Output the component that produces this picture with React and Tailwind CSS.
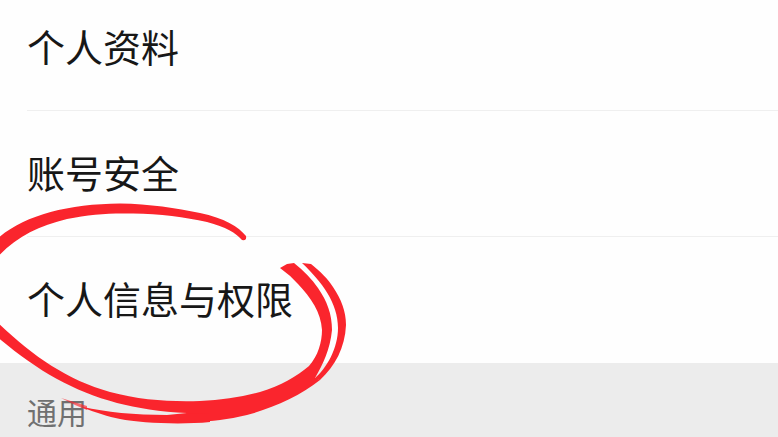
const accountItems = [
  { name: "个人资料", href: "#profile" },
  { name: "账号安全", href: "#security" },
  { name: "个人信息与权限", href: "#permissions" },
];

// Hand-drawn red circle around the permissions row
function MarkerCircle() {
  return (
    <svg
      className="absolute top-0 left-0 pointer-events-none text-[#fa252d]"
      width="360"
      height="437"
      viewBox="0 0 360 437"
      fill="currentColor"
      aria-hidden="true"
    >
      {/* top arc */}
      <path d="M-4 240C22 216 66 204 120 203.500C150 204 176 208 200 213C224 218 239 227 246 236Q247 241 242 240C236 233 226 227 207 222C185 217 160 214 133 213.500C110 213 90 214 67 219C38 226 14 238 -4 259Z" />
      {/* bottom sweep with the inner strand */}
      <path d="M-4 321C30 354 66 380 110 392C140 400 170 402 200 401C222 400 242 397 260 392C281 386 297 376 309 366C318 356 322 342 322 330C321 312 311 298 298 284Q290 275 280 268L287 264L294 263C304 271 312 279 318 288C327 301 332 314 332 330C330 350 323 364 315 378L320 380C300 396 273 408 247 415C222 421 200 423 180 421L187 413C160 412 137 408 117 403C72 391 36 370 -4 336Z" />
      {/* outer strand */}
      <path d="M302 263L311 264C320 271 328 279 333 287C341 299 346 311 346 325C345 348 335 366 320 380L314 379C327 368 338 348 338 328C338 303 322 282 302 263Z" />
      {/* tail */}
      <path d="M83 407C105 412 135 415 167 415L187 413L210 414L210 422C180 425 140 423 120 419C108 417 96 412 83 408Z" />
      <path d="M61 398L87 406V410Q74 405 61 398Z" opacity="0.65" />
    </svg>
  );
}

export default function App() {
  return (
    <main
      className="relative min-h-screen overflow-hidden bg-[#ececec] font-['Noto_Sans_CJK_SC',sans-serif]"
      lang="zh-CN"
    >
      <nav className="bg-[#fefefe] pl-[27px]">
        {accountItems.map((item) => (
          <a
            key={item.name}
            href={item.href}
            className="block pt-[33px] pb-9 text-[38px] leading-[56px] text-[#171717] border-b border-[#efefef] first:pt-[18px] last:border-transparent"
          >
            {item.name}
          </a>
        ))}
      </nav>

      <h2 className="px-[27px] pt-[26px] text-[30px] leading-[44px] text-[#707070]">
        通用
      </h2>

      <MarkerCircle />
    </main>
  );
}
